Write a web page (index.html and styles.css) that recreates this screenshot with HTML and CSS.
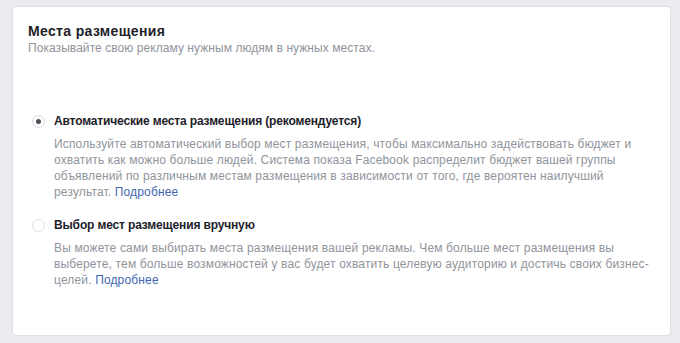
FILE: index.html
```html
<!DOCTYPE html>
<html lang="ru">
<head>
    <meta charset="UTF-8">
    <meta name="viewport" content="width=device-width, initial-scale=1.0">
    <title>Места размещения</title>
    <link rel="stylesheet" href="styles.css">
</head>
<body>
    <div class="card">
        <div class="header">
            <h2>Места размещения</h2>
            <p>Показывайте свою рекламу нужным людям в нужных местах.</p>
        </div>

        <div class="options">
            <label class="option">
                <span class="radio checked"></span>
                <span class="option-body">
                    <span class="option-title">Автоматические места размещения (рекомендуется)</span>
                    <span class="option-text">Используйте автоматический выбор мест размещения, чтобы максимально задействовать бюджет и охватить как можно больше людей. Система показа Facebook распределит бюджет вашей группы объявлений по различным местам размещения в зависимости от того, где вероятен наилучший результат. <a href="#">Подробнее</a></span>
                </span>
            </label>

            <label class="option">
                <span class="radio"></span>
                <span class="option-body">
                    <span class="option-title">Выбор мест размещения вручную</span>
                    <span class="option-text">Вы можете сами выбирать места размещения вашей рекламы. Чем больше мест размещения вы выберете, тем больше возможностей у вас будет охватить целевую аудиторию и достичь своих бизнес-целей. <a href="#">Подробнее</a></span>
                </span>
            </label>
        </div>
    </div>
</body>
</html>
```

FILE: styles.css
```css
* {
    box-sizing: border-box;
}

body {
    margin: 0;
    padding: 6px 9px 0 12px;
    background-color: #e9ebee;
    font-family: 'Liberation Sans', Arial, Helvetica, sans-serif;
    color: #1d2129;
}

.card {
    background: white;
    border: 1px solid #dddfe2;
    border-radius: 4px;
    padding: 16px 15px 47px;
}

.header h2 {
    margin: 0;
    font-size: 14px;
    line-height: 17px;
    font-weight: bold;
    letter-spacing: 0.35px;
}

.header p {
    margin: 0;
    font-size: 12px;
    line-height: 16px;
    letter-spacing: 0.06px;
    color: #90949c;
}

.options {
    display: flex;
    flex-direction: column;
    gap: 17px;
    margin-top: 57px;
    padding-left: 4px;
}

.option {
    display: flex;
    gap: 9px;
    cursor: pointer;
}

.radio {
    flex: none;
    width: 13px;
    height: 13px;
    margin-top: 2px;
    border: 1px solid #dadde1;
    border-radius: 50%;
    display: flex;
    justify-content: center;
    align-items: center;
}

.radio.checked::after {
    content: '';
    width: 5px;
    height: 5px;
    border-radius: 50%;
    background: #4b4f56;
}

.option-body {
    display: flex;
    flex-direction: column;
    gap: 7px;
    font-size: 12px;
    line-height: 16px;
}

.option-title {
    font-weight: bold;
    letter-spacing: -0.15px;
}

.option-text {
    color: #90949c;
    letter-spacing: 0.15px;
}

.option-text a {
    color: #4267b2;
    text-decoration: none;
}
```
